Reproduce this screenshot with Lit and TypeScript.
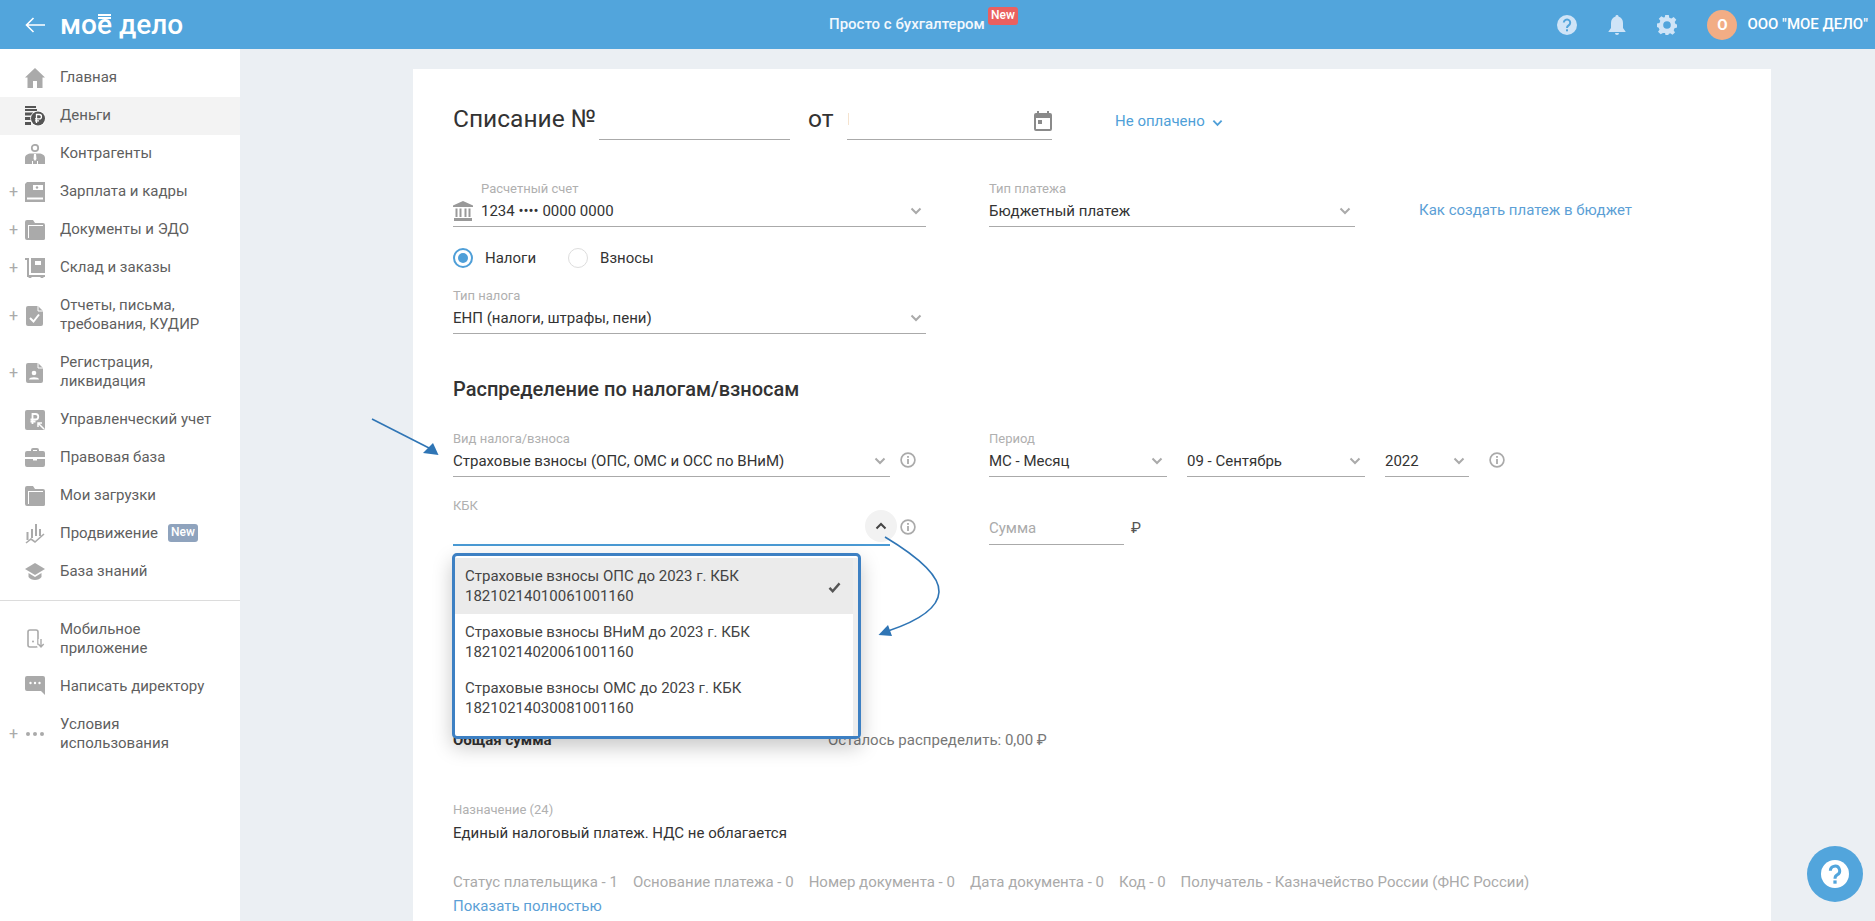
import { LitElement, html, css, svg } from "lit";
import { customElement } from "lit/decorators.js";

const ic = (c: unknown) => html`<svg class="ni" viewBox="0 0 20 20" width="20" height="20" fill="#aaa">${c}</svg>`;
const icons: Record<string, unknown> = {
  home: ic(svg`<path d="M10 0 20 9.500H17.500V20H12V13H8V20H2.500V9.500H0Z"/>`),
  money: ic(svg`<g fill="#555"><rect x="0" y="0" width="11" height="2"/><rect x="0" y="3" width="12" height="2"/><rect x="0" y="6.500" width="8" height="3"/><rect x="0" y="11" width="6" height="3"/><rect x="0" y="16" width="6" height="3"/></g><circle cx="13" cy="12.500" r="7.800" fill="#fff"/><circle cx="13" cy="12.500" r="7" fill="#555"/><path d="M11.500 17V8.500H14.300A2 2 0 0 1 14.300 12.800H10M10 14.800H14" fill="none" stroke="#fff" stroke-width="1.300"/>`),
  person: ic(svg`<circle cx="10" cy="4" r="3.200" fill="none" stroke="#aaa" stroke-width="1.800"/><path d="M0 20V14C0 11 3 9.500 6 9.500H14C17 9.500 20 11 20 14V20H13V17H12V20H8V17H7V20Z"/><path d="M9 10H11L11.500 15 10 17 8.500 15Z" fill="#fff"/>`),
  wallet: ic(svg`<path d="M2 0H20V20H0V2ZM2 15.500V17.500H18V15.500Z" fill-rule="evenodd"/><path d="M8 3H18V8H8Z" fill="#fff"/><circle cx="12" cy="5.500" r="1.200"/>`),
  folder: ic(svg`<path d="M0 2A2 2 0 0 1 2 0H8L10 3H18A2 2 0 0 1 20 5V18A2 2 0 0 1 18 20H2A2 2 0 0 1 0 18ZM3 5V18H18V5Z" fill-rule="evenodd"/><path d="M4 6H20V18A2 2 0 0 1 18 20H4Z"/>`),
  cart: ic(svg`<path d="M0 0H4V17H20V19H2V2H0Z"/><rect x="6" y="0" width="14" height="15"/><rect x="10" y="3" width="6" height="4" fill="#fff"/><circle cx="5" cy="19" r="1.500"/><circle cx="17" cy="19" r="1.500"/>`),
  docCheck: ic(svg`<path d="M3 0H13L18 5V18A2 2 0 0 1 16 20H3A2 2 0 0 1 1 18V2A2 2 0 0 1 3 0Z"/><path d="M5 12 8.500 15.500 14 8.500" fill="none" stroke="#fff" stroke-width="2"/><path d="M13 0V5H18" fill="none" stroke="#fff"/>`),
  docPerson: ic(svg`<path d="M3 0H13L18 5V18A2 2 0 0 1 16 20H3A2 2 0 0 1 1 18V2A2 2 0 0 1 3 0Z"/><path d="M13 0V5H18" fill="none" stroke="#fff"/><circle cx="9" cy="10" r="2.300" fill="#fff"/><path d="M4 16.500C4 13.500 14 13.500 14 16.500Z" fill="#fff"/>`),
  ruble: ic(svg`<rect width="20" height="20" rx="2"/><path d="M7.500 14V4H10.500A2.600 2.600 0 0 1 10.500 9.500H5.500M5.500 11.700H10.500" fill="none" stroke="#fff" stroke-width="1.800"/><path d="M19 19 13 13M13 17V13H17" fill="none" stroke="#fff" stroke-width="1.500"/>`),
  case: ic(svg`<path d="M6 3V2A2 2 0 0 1 8 0H12A2 2 0 0 1 14 2V3H18A2 2 0 0 1 20 5V9H0V5A2 2 0 0 1 2 3ZM8 3H12V2H8Z" fill-rule="evenodd"/><path d="M0 11H8V12.500H12V11H20V17A2 2 0 0 1 18 19H2A2 2 0 0 1 0 17Z"/>`),
  chart: ic(svg`<rect x="1.500" y="8" width="2" height="8"/><rect x="6" y="5" width="2" height="9"/><rect x="10" y="0" width="2" height="12"/><rect x="14" y="5" width="2" height="7"/><path d="M1 19 6 15 10 18 19 10" fill="none" stroke="#aaa" stroke-width="1.600"/>`),
  cap: ic(svg`<path d="M10 1 20 7 10 13 0 7Z"/><path d="M3.500 11 10 15 16.500 11V15C14 19 6 19 3.500 15Z"/>`),
  phone: ic(svg`<rect x="3" y="1" width="10" height="17" rx="2" fill="none" stroke="#aaa" stroke-width="1.600"/><rect x="7" y="11.500" width="2" height="2" rx="1" /><path d="M16 10V17.500M13.300 15 16 18 18.700 15" fill="none" stroke="#fff" stroke-width="5"/><path d="M16 10V17.500M13.300 15 16 18 18.700 15" fill="none" stroke="#aaa" stroke-width="1.400"/>`),
  chat: ic(svg`<path d="M2 0H18A2 2 0 0 1 20 2V19L16 15H2A2 2 0 0 1 0 13V2A2 2 0 0 1 2 0Z"/><circle cx="5.500" cy="7" r="1.200" fill="#fff"/><circle cx="10" cy="7" r="1.200" fill="#fff"/><circle cx="14.500" cy="7" r="1.200" fill="#fff"/>`),
  dots: ic(svg`<circle cx="3" cy="10" r="2"/><circle cx="10" cy="10" r="2"/><circle cx="17" cy="10" r="2"/>`),
};

type Item = { t: unknown; i: string; plus?: boolean; active?: boolean; badge?: boolean };
const top: Item[] = [
  { t: "Главная", i: "home" },
  { t: "Деньги", i: "money", active: true },
  { t: "Контрагенты", i: "person" },
  { t: "Зарплата и кадры", i: "wallet", plus: true },
  { t: "Документы и ЭДО", i: "folder", plus: true },
  { t: "Склад и заказы", i: "cart", plus: true },
  { t: html`Отчеты, письма,<br />требования, КУДИР`, i: "docCheck", plus: true },
  { t: html`Регистрация,<br />ликвидация`, i: "docPerson", plus: true },
  { t: "Управленческий учет", i: "ruble" },
  { t: "Правовая база", i: "case" },
  { t: "Мои загрузки", i: "folder" },
  { t: "Продвижение", i: "chart", badge: true },
  { t: "База знаний", i: "cap" },
];
const bottom: Item[] = [
  { t: html`Мобильное<br />приложение`, i: "phone" },
  { t: "Написать директору", i: "chat" },
  { t: html`Условия<br />использования`, i: "dots", plus: true },
];

const chev = (up = false) => html`<svg class="chev ${up ? "up" : ""}" viewBox="0 0 12 8" width="12" height="8"><path d="M1.500 1.500 6 6 10.500 1.500" fill="none" stroke="currentColor" stroke-width="2"/></svg>`;
const info = html`<svg class="info" viewBox="0 0 16 16" width="16" height="16"><circle cx="8" cy="8" r="6.900" fill="none" stroke="#aaa" stroke-width="1.700"/><rect x="7.100" y="7" width="1.800" height="5" fill="#aaa"/><rect x="7.100" y="4" width="1.800" height="1.800" fill="#aaa"/></svg>`;

const kbk = [
  ["Страховые взносы ОПС до 2023 г. КБК", "18210214010061001160"],
  ["Страховые взносы ВНиМ до 2023 г. КБК", "18210214020061001160"],
  ["Страховые взносы ОМС до 2023 г. КБК", "18210214030081001160"],
];

@customElement("app-root")
export class AppRoot extends LitElement {
  static styles = css`
    :host { display: block; width: 1875px; height: 921px; overflow: hidden; position: relative; font: 15px/19px Roboto, sans-serif; color: #333; background: #ebeff3; }
    .hdr { height: 49px; background: #52a5dc; display: flex; align-items: center; color: #fff; position: relative; }
    .back { margin-left: 25px; }
    .logo { margin-left: 15px; font: 500 28px/49px Roboto, sans-serif; color: #fff; white-space: nowrap; }
    .eo { position: relative; }
    .eo::before { content: ""; position: absolute; left: 1px; right: 1px; top: 6px; height: 1px; border-top: 2px solid #fff; border-bottom: 2px solid #fff; }
    .center { position: absolute; left: 829px; top: 0; height: 49px; display: flex; align-items: center; font-weight: 500; white-space: nowrap; color: #f2f8fd; }
    .nbadge { position: absolute; left: 159px; top: 7px; width: 30px; height: 18px; border-radius: 3px; background: #ea6060; font-size: 12px; line-height: 17px; text-align: center; color: #fff; }
    .right { margin-left: auto; display: flex; align-items: center; padding-right: 7px; }
    .hi { display: block; margin-right: 30px; }
    .ava { width: 30px; height: 30px; border-radius: 50%; background: #f2ad85; font-weight: 700; line-height: 30px; text-align: center; margin-left: 30px; margin-right: 10px; color: #fff; }
    .co { font-weight: 500; white-space: nowrap; }
    .body { display: flex; height: 872px; }
    .side { width: 240px; flex: none; background: #fff; padding-top: 10px; box-sizing: border-box; }
    .row { display: flex; align-items: center; height: 38px; padding-left: 60px; position: relative; color: #5f5f5f; white-space: nowrap; }
    .row.two { height: 57px; }
    .row.active { background: #f3f3f3; }
    .upper .row > span:not(.plus):not(.tag) { margin-top: -2px; }
    .ni { position: absolute; left: 25px; top: 50%; margin-top: -10px; }
    .plus { position: absolute; left: 9px; top: 50%; margin-top: -10px; color: #aaa; font-size: 16px; line-height: 20px; }
    .tag { margin-left: 10px; margin-top: -2px; width: 30px; height: 18px; border-radius: 3px; background: #8fa3bd; color: #fff; font-size: 12px; font-weight: 500; line-height: 17px; text-align: center; }
    .div { height: 1px; background: #dcdcdc; margin: 9px 0; }
    .main { flex: 1; padding: 20px 104px 0 173px; min-width: 0; }
    .card { background: #fff; height: 900px; padding: 31px 40px 0; box-sizing: border-box; position: relative; }
    .title { display: flex; align-items: flex-end; height: 40px; }
    .t1 { font-size: 24.500px; line-height: 36px; padding-bottom: 3px; color: #333; width: 146px; white-space: nowrap; }
    .line { border-bottom: 1px solid #aaa; height: 40px; box-sizing: border-box; position: relative; }
    .t2 { font-size: 24.500px; line-height: 36px; padding-bottom: 3px; width: 39px; margin-left: 18px; }
    .cursor { position: absolute; left: 1px; top: 13px; width: 1px; height: 12px; background: #f5e3cf; }
    .cal { position: absolute; right: 0; top: 11px; }
    .status { margin-left: 63px; color: #4f9fd8; align-self: flex-start; margin-top: 12px; display: flex; align-items: center; gap: 7px; white-space: nowrap; }
    .status .chev { margin-top: 3px; width: 11px; color: #4f9fd8; }
    .f { display: flex; flex-direction: column; flex: none; box-sizing: border-box; position: relative; }
    .f label { font-size: 13px; line-height: 16px; height: 16px; color: #b0b0b0; white-space: nowrap; }
    .v { height: 25px; margin-top: 4px; border-bottom: 1px solid #aaa; display: flex; justify-content: space-between; line-height: 20px; box-sizing: content-box; padding-right: 4px; color: #333; white-space: nowrap; }
    .chev { color: #aaa; margin-top: 6px; flex: none; }
    .chev.up { transform: rotate(180deg); }
    .r1 { display: flex; margin-top: 41px; align-items: flex-start; }
    .bank { position: absolute; left: 0; top: 20px; }
    .acc label { padding-left: 28px; }
    .acc .v { padding-left: 28px; }
    .how { margin-left: 64px; color: #5c9fd6; margin-top: 20px; white-space: nowrap; }
    .radios { display: flex; align-items: center; height: 20px; margin-top: 21px; }
    .rd { width: 20px; height: 20px; border-radius: 50%; box-sizing: border-box; border: 1px solid #ddd; margin-right: 12px; flex: none; }
    .rd.on { border: 2px solid #4f9fd8; padding: 3px; }
    .rd.on::after { content: ""; display: block; width: 10px; height: 10px; border-radius: 50%; background: #4f9fd8; }
    .rl { margin-right: 32px; }
    .tax { margin-top: 20px; }
    h2 { margin: 43px 0 30px; font-size: 20px; font-weight: 500; line-height: 24px; color: #333; }
    .r2 { display: flex; align-items: flex-start; position: relative; }
    .ii { margin: 21px 0 0 10px; flex: none; display: block; }
    .left { width: 473px; display: flex; flex: none; margin-right: 63px; }
    .r3 { margin-top: 21px; height: 47px; display: flex; align-items: flex-start; position: relative; }
    .v.focus { height: 26px; border-bottom: 2px solid #4a9ad4; position: relative; }
    .round { position: absolute; left: 412px; top: 12px; width: 32px; height: 32px; border-radius: 50%; background: #f2f2f2; display: flex; align-items: center; justify-content: center; }
    .round .chev { margin: 0; color: #444; }
    .sum { width: 135px; margin-top: 20px; border-bottom: 1px solid #aaa; height: 20px; line-height: 20px; color: #aaa; padding-bottom: 6px; box-sizing: content-box; }
    .rub { margin: 20px 0 0 7px; color: #555; line-height: 20px; }
    .dd { position: absolute; left: -1px; top: 55px; width: 409px; height: 186px; box-sizing: border-box; border: 3px solid #3d80c3; border-radius: 5px; background: #fff; box-shadow: 0 8px 20px rgba(0, 0, 0, 0.22); padding-top: 2px; z-index: 2; display: flex; }
    .list { flex: 1; }
    .sb { width: 5px; background: #eee; }
    .it { height: 56px; box-sizing: border-box; padding: 8px 10px; line-height: 20px; color: #444; position: relative; white-space: nowrap; }
    .it.sel { background: #ebebeb; }
    .check { position: absolute; right: 12px; top: 24px; }
    .tot { display: flex; margin-top: 186px; line-height: 19px; }
    .tot b { width: 375px; font-weight: 700; color: #333; }
    .tot span { color: #777; white-space: nowrap; }
    .lab { font-size: 13px; line-height: 16px; color: #b0b0b0; margin-top: 52px; }
    .pur { margin-top: 5px; line-height: 20px; color: #333; }
    .meta { margin-top: 30px; color: #aaa; display: flex; gap: 15px; white-space: nowrap; }
    .show { margin-top: 5px; color: #5c9fd6; }
    .fab { position: absolute; left: 1807px; top: 846px; width: 56px; height: 56px; border-radius: 50%; background: #52a5dc; display: flex; align-items: center; justify-content: center; z-index: 3; }
    .arrows { position: absolute; left: 0; top: 0; pointer-events: none; z-index: 4; }
  `;

  private rowT(it: Item) {
    return html`<div class="row ${typeof it.t !== "string" ? "two" : ""} ${it.active ? "active" : ""}">
      ${it.plus ? html`<span class="plus">+</span>` : ""}${icons[it.i]}<span>${it.t}</span>
      ${it.badge ? html`<span class="tag">New</span>` : ""}
    </div>`;
  }

  private field(label: string, value: string, w: number, cls = "") {
    return html`<div class="f ${cls}" style="width:${w}px"><label>${label}</label><div class="v"><span>${value}</span>${chev()}</div></div>`;
  }

  render() {
    return html`
      <div class="hdr">
        <svg class="back" viewBox="0 0 20 16" width="20" height="16"><path d="M20 8H1.500M8.500 1 1.500 8 8.500 15" fill="none" stroke="#fff" stroke-width="1.600"/></svg>
        <div class="logo">мо<span class="eo">е</span> дело</div>
        <div class="center">Просто с бухгалтером<span class="nbadge">New</span></div>
        <div class="right">
          <svg class="hi" viewBox="0 0 20 20" width="20" height="20"><circle cx="10" cy="10" r="10" fill="#cfe4f7"/><path d="M6.800 7.500A3.200 3.200 0 1 1 11.500 10.500C10.400 11.100 10 11.600 10 13" fill="none" stroke="#52a5dc" stroke-width="2"/><rect x="9" y="14.300" width="2" height="2" fill="#52a5dc"/></svg>
          <svg class="hi" viewBox="0 0 20 20" width="20" height="20"><path d="M10 0A1.500 1.500 0 0 1 11.500 1.600C14.500 2.400 16 5 16 8V13L18.500 16.500V17H1.500V16.500L4 13V8C4 5 5.500 2.400 8.500 1.600A1.500 1.500 0 0 1 10 0ZM8 18H12A2 2 0 0 1 8 18Z" fill="#cfe4f7"/></svg>
          <svg viewBox="0 0 20 20" width="20" height="20"><path d="M8.200 0H11.800L12.300 2.700 14.400 3.600 16.700 2.100 19.300 4.700 17.700 6.900 18.500 9 20 9.400V12.600L17.500 13.200 16.700 15.200 18 17.500 15.500 19.800 13.200 18.300 11.500 19V20H8.500L8 18 5.900 17.900 3.700 19.300 1 16.800 2.500 14.700 1.700 12.700 0 12V8.400L2.500 8 3.300 5.800 1.800 3.700 4.300 1.200 6.500 2.600 7.800 2.200ZM10 6.200A3.800 3.800 0 1 0 10 13.800 3.800 3.800 0 1 0 10 6.200Z" fill="#cfe4f7" fill-rule="evenodd"/></svg>
          <div class="ava">О</div>
          <div class="co">ООО "МОЕ ДЕЛО"</div>
        </div>
      </div>
      <div class="body">
        <div class="side">
          <div class="upper">${top.map((i) => this.rowT(i))}</div>
          <div class="div"></div>
          ${bottom.map((i) => this.rowT(i))}
        </div>
        <div class="main">
          <div class="card">
            <div class="title">
              <div class="t1">Списание №</div>
              <div class="line" style="width:191px"></div>
              <div class="t2">от</div>
              <div class="line" style="width:205px">
                <span class="cursor"></span>
                <svg class="cal" viewBox="0 0 18 20" width="18" height="20"><path d="M3 2V0H5V2H13V0H15V2H16A2 2 0 0 1 18 4V18A2 2 0 0 1 16 20H2A2 2 0 0 1 0 18V4A2 2 0 0 1 2 2ZM2 7V18H16V7Z" fill="#8a8a8a" fill-rule="evenodd"/><rect x="4" y="9" width="4" height="4" fill="#8a8a8a"/></svg>
              </div>
              <div class="status">Не оплачено ${chev()}</div>
            </div>
            <div class="r1">
              <div class="f acc" style="width:473px">
                <svg class="bank" viewBox="0 0 20 20" width="20" height="20" fill="#999"><path d="M10 0 20 4.500V6H0V4.500Z"/><rect x="2.500" y="7.500" width="2" height="8.500"/><rect x="6.500" y="7.500" width="2" height="8.500"/><rect x="11.500" y="7.500" width="2" height="8.500"/><rect x="15.500" y="7.500" width="2" height="8.500"/><rect x="1" y="17" width="18" height="3"/></svg>
                <label>Расчетный счет</label>
                <div class="v"><span>1234 •••• 0000 0000</span>${chev()}</div>
              </div>
              <div style="width:63px"></div>
              ${this.field("Тип платежа", "Бюджетный платеж", 366)}
              <div class="how">Как создать платеж в бюджет</div>
            </div>
            <div class="radios">
              <span class="rd on"></span><span class="rl">Налоги</span>
              <span class="rd"></span><span>Взносы</span>
            </div>
            ${this.field("Тип налога", "ЕНП (налоги, штрафы, пени)", 473, "tax")}
            <h2>Распределение по налогам/взносам</h2>
            <div class="r2">
              <div class="left">
                ${this.field("Вид налога/взноса", "Страховые взносы (ОПС, ОМС и ОСС по ВНиМ)", 437)}
                <span class="ii">${info}</span>
              </div>
              ${this.field("Период", "МС - Месяц", 178)}
              <div style="width:20px"></div>
              ${this.field("", "09 - Сентябрь", 178)}
              <div style="width:20px"></div>
              ${this.field("", "2022", 84)}
              <span class="ii" style="margin-left:20px">${info}</span>
            </div>
            <div class="r3">
              <div class="left">
                <div class="f" style="width:437px">
                  <label>КБК</label>
                  <div class="v focus"></div>
                  <div class="round">${chev(true)}</div>
                  <div class="dd">
                    <div class="list">
                      ${kbk.map((k, i) => html`<div class="it ${i === 0 ? "sel" : ""}">${k[0]}<br />${k[1]}
                        ${i === 0 ? html`<svg class="check" viewBox="0 0 14 12" width="13" height="11"><path d="M1.500 6.500 5 10 12.500 1.500" fill="none" stroke="#555" stroke-width="2.600"/></svg>` : ""}</div>`)}
                    </div>
                    <div class="sb"></div>
                  </div>
                </div>
                <span class="ii">${info}</span>
              </div>
              <div class="sum">Сумма</div>
              <span class="rub">₽</span>
            </div>
            <div class="tot"><b>Общая сумма</b><span>Осталось распределить: 0,00 ₽</span></div>
            <div class="lab">Назначение (24)</div>
            <div class="pur">Единый налоговый платеж. НДС не облагается</div>
            <div class="meta"><span>Статус плательщика - 1</span><span>Основание платежа - 0</span><span>Номер документа - 0</span><span>Дата документа - 0</span><span>Код - 0</span><span>Получатель - Казначейство России (ФНС России)</span></div>
            <div class="show">Показать полностью</div>
          </div>
        </div>
      </div>
      <div class="fab"><svg viewBox="0 0 24 24" width="28" height="28"><circle cx="12" cy="12" r="12" fill="#fff"/><path d="M8 9.200A4 4 0 1 1 13.800 12.800C12.500 13.500 12 14 12 16" fill="none" stroke="#52a5dc" stroke-width="2.600"/><rect x="10.600" y="17.500" width="2.800" height="2.800" fill="#52a5dc"/></svg></div>
      <svg class="arrows" width="1875" height="921" viewBox="0 0 1875 921">
        <path d="M372 419 429 448" fill="none" stroke="#2f75b5" stroke-width="1.600"/>
        <path d="M438.500 455 423 453 433 443Z" fill="#2f75b5"/>
        <path d="M885 537C915 555 940 575 939 592C938 610 915 622 888 631" fill="none" stroke="#2f75b5" stroke-width="1.600"/>
        <path d="M878.500 635 888 625 892 636Z" fill="#2f75b5"/>
      </svg>
    `;
  }
}
